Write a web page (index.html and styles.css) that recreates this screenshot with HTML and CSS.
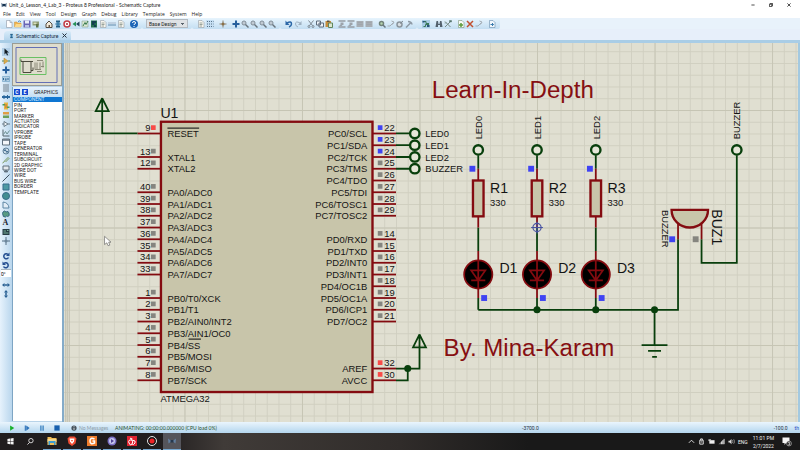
FILE: index.html
```html
<!DOCTYPE html>
<html lang="en">
<head>
<meta charset="utf-8">
<title>Schematic Capture</title>
<link rel="stylesheet" href="styles.css">
</head>
<body>
<svg class="defs" aria-hidden="true">
  <defs>
    <symbol id="new" viewBox="0 0 16 16"><path d="M3 1h7l4 4v10H3z" fill="#fff" stroke="#7c8794"/><path d="M10 1v4h4" fill="none" stroke="#7c8794"/></symbol>
    <symbol id="open" viewBox="0 0 16 16"><path d="M1 4h5l1 2h7v8H1z" fill="#f0b650" stroke="#c98f3e"/><path d="M4 8h12l-3 6H1z" fill="#fbd98a"/><path d="M8 3q4-3 6 1" fill="none" stroke="#4a90c8" stroke-width="2"/></symbol>
    <symbol id="save" viewBox="0 0 16 16"><path d="M1 1h14v14H1z" fill="#6a65b5"/><path d="M4 1h8v6H4z" fill="#e8ecf8"/><path d="M4 10h8v5H4z" fill="#b9c0e2"/></symbol>
    <symbol id="pack" viewBox="0 0 16 16"><path d="M1 3h13v8H1z" fill="#8f9b75"/><path d="M3 5h6v3H3z" fill="#d6dfba"/><path d="M8 8h5v7H8z" fill="#5f7446"/></symbol>
    <symbol id="home" viewBox="0 0 16 16"><path d="M2 8l6-6 6 6v7H2z" fill="#f4eddc" stroke="#564c42" stroke-width="2"/><path d="M7 10h3v5H7z" fill="#685743"/></symbol>
    <symbol id="chip" viewBox="0 0 16 16"><path d="M4 1h8v4H4zM4 11h8v4H4z" fill="#235e86"/><path d="M8 4v8M3 8h10" stroke="#3479a5" stroke-width="3"/></symbol>
    <symbol id="target" viewBox="0 0 16 16"><circle cx="8" cy="8" r="6" fill="#fff" stroke="#c33b45" stroke-width="3"/><circle cx="8" cy="8" r="2" fill="#a82432"/></symbol>
    <symbol id="rewind" viewBox="0 0 16 16"><path d="M8 3v10L1 8z" fill="#28925a"/><path d="M15 3v10L8 8z" fill="#22475a"/></symbol>
    <symbol id="chart" viewBox="0 0 16 16"><path d="M2 2h12v12H2z" fill="#dce9d5" stroke="#7a9480"/><path d="M4 12l4-7 2 4 4-7" fill="none" stroke="#3c7c50" stroke-width="2"/></symbol>
    <symbol id="board" viewBox="0 0 16 16"><path d="M2 1h12v14H2z" fill="#23704d"/><path d="M4 4h8M4 8h5M8 12h4" stroke="#0e2f53" stroke-width="3"/></symbol>
    <symbol id="doc" viewBox="0 0 16 16"><path d="M3 1h7l4 4v10H3z" fill="#f7f6ef" stroke="#858d94"/><path d="M5 6h6M5 9h6M5 12h5" stroke="#9ba49c" stroke-width="2"/></symbol>
    <symbol id="dash" viewBox="0 0 16 16"><path d="M0 6h16" stroke="#b9c9da" stroke-width="3"/><path d="M0 10h16" stroke="#6189aa" stroke-width="2"/></symbol>
    <symbol id="help" viewBox="0 0 16 16"><circle cx="8" cy="8" r="8" fill="#1c65b7"/><path d="M5 6q0-3 3-3t3 3q0 2-3 3v1M8 12v2" fill="none" stroke="#fff" stroke-width="2"/></symbol>
    <symbol id="grid" viewBox="0 0 16 16"><path d="M0 0h16v16H0z" fill="#c6dff3"/><path d="M2 3h13M2 8h13M2 13h13" stroke="#587287" stroke-width="2" stroke-dasharray="2 2"/></symbol>
    <symbol id="origin" viewBox="0 0 16 16"><path d="M8 1v14M1 8h14" stroke="#8a806f" stroke-width="2"/><circle cx="8" cy="8" r="3" fill="#8a7047"/></symbol>
    <symbol id="plus" viewBox="0 0 16 16"><path d="M8 1v14M1 8h14" stroke="#275f9c" stroke-width="4"/></symbol>
    <symbol id="lens" viewBox="0 0 16 16"><circle cx="6" cy="6" r="4" fill="#dbe5ee" stroke="#7b8791" stroke-width="2"/><path d="M9 9l6 6" stroke="#69747d" stroke-width="3"/><path d="M4 6h4" stroke="#69747d"/></symbol>
    <symbol id="undo" viewBox="0 0 16 16"><path d="M4 6q9-5 9 2 0 4-5 6" fill="none" stroke="#2b67a7" stroke-width="3"/><path d="M1 1v9h8z" fill="#2b67a7"/></symbol>
    <symbol id="redo" viewBox="0 0 16 16"><path d="M12 6q-9-5-9 2 0 4 5 6" fill="none" stroke="#9eb0c0" stroke-width="2"/><path d="M15 2v8H8z" fill="#9eb0c0"/></symbol>
    <symbol id="cut" viewBox="0 0 16 16"><path d="M3 1l8 10M13 1L5 11" stroke="#7e8993" stroke-width="2"/><circle cx="4" cy="13" r="2" fill="none" stroke="#7e8993" stroke-width="2"/><circle cx="12" cy="13" r="2" fill="none" stroke="#7e8993" stroke-width="2"/></symbol>
    <symbol id="copy" viewBox="0 0 16 16"><path d="M1 2h8v8H1zM6 6h9v8H6z" fill="#edf2f7" stroke="#5f6d7d" stroke-width="2"/></symbol>
    <symbol id="paste" viewBox="0 0 16 16"><path d="M1 2h11v12H1z" fill="#c58d3c"/><path d="M4 1h5v3H4z" fill="#5d5140"/><path d="M7 6h8v9H7z" fill="#dbe6d0" stroke="#60865c" stroke-width="2"/></symbol>
    <symbol id="block" viewBox="0 0 16 16"><path d="M1 2h14v12H1z" fill="#a7adb3"/><path d="M3 5h10M3 9h10" stroke="#989fa6"/></symbol>
    <symbol id="blocks" viewBox="0 0 16 16"><path d="M1 2h14M1 14h14" stroke="#969da4" stroke-width="3"/><path d="M5 5h6v5H5zM2 12l4-4 3 4" fill="#9da4ab"/></symbol>
    <symbol id="pick" viewBox="0 0 16 16"><circle cx="7" cy="7" r="4" fill="#b4d4af" stroke="#71827a" stroke-width="3"/><path d="M10 10l5 5" stroke="#687780" stroke-width="3"/></symbol>
    <symbol id="gate" viewBox="0 0 16 16"><path d="M1 12h5l6-6M9 2l5 2-3 5" fill="none" stroke="#a3acb4" stroke-width="2"/></symbol>
    <symbol id="ball" viewBox="0 0 16 16"><circle cx="7" cy="9" r="5" fill="#d8dfe4" stroke="#8b959d" stroke-width="3"/><path d="M8 7l6-5" stroke="#7d8992" stroke-width="2"/></symbol>
    <symbol id="hammer" viewBox="0 0 16 16"><path d="M2 15l9-9M6 3q7 0 8 6" fill="none" stroke="#8e9aa5" stroke-width="3"/></symbol>
    <symbol id="wires" viewBox="0 0 16 16"><path d="M0 0h16v16H0z" fill="#a9cde6"/><path d="M2 3h6v4h6M3 13h4V9h7" fill="none" stroke="#39785a" stroke-width="2"/><path d="M1 2h4v3H1zM10 10h5v4h-5z" fill="#285478"/></symbol>
    <symbol id="find" viewBox="0 0 16 16"><path d="M3 2h3l1 6h2l1-6h3l2 12h-5v-4H6v4H1z" fill="#53616d"/></symbol>
    <symbol id="wand" viewBox="0 0 16 16"><path d="M2 3l11 11M2 14L13 3" stroke="#778a86" stroke-width="2"/><path d="M11 1h4v3h-4zM1 6h4" fill="#56756e" stroke="#56756e"/></symbol>
    <symbol id="add" viewBox="0 0 16 16"><path d="M3 1h7l4 4v10H3z" fill="#f8faf7" stroke="#66805d"/><path d="M8 6v8M4 10h8" stroke="#5d9c3c" stroke-width="3"/></symbol>
    <symbol id="del" viewBox="0 0 16 16"><path d="M2 2l12 12M14 2L2 14" stroke="#c1502f" stroke-width="3"/></symbol>
    <symbol id="sheet" viewBox="0 0 16 16"><path d="M3 1h7l4 4v10H3z" fill="#f0f6fb" stroke="#4f7a9e"/><path d="M5 9h6M8 6l3 3-3 3" fill="none" stroke="#397bae" stroke-width="2"/></symbol>
    <symbol id="arrow" viewBox="0 0 16 16"><path d="M0 0h16v16H0z" fill="#b2cfe7"/><path d="M5 1v12l3-3 2 5 2-1-2-5h4z" fill="#111a23"/></symbol>
    <symbol id="comp" viewBox="0 0 16 16"><path d="M0 8h4M12 8h4" stroke="#4a8759" stroke-width="2"/><path d="M4 2l8 6-8 6z" fill="#d7b04c" stroke="#b97928"/></symbol>
    <symbol id="lbl" viewBox="0 0 16 16"><path d="M1 3h14v10H1z" fill="#b4d0e4" stroke="#5790b8"/><path d="M3 10V6M6 10h3M6 8h3M12 6v4" stroke="#2f6794" stroke-width="2"/></symbol>
    <symbol id="lines" viewBox="0 0 16 16"><path d="M2 2h12M2 6h12M2 10h12M2 14h12" stroke="#74828e" stroke-width="2"/></symbol>
    <symbol id="bus" viewBox="0 0 16 16"><path d="M0 8h16" stroke="#2c6aa3" stroke-width="4"/><path d="M4 4v8M11 4v8" stroke="#286495" stroke-width="2"/></symbol>
    <symbol id="sub" viewBox="0 0 16 16"><path d="M4 1h8v14H4z" fill="#e3b644"/><path d="M1 4h5v3H1zM10 9h5v3h-5z" fill="#4c9a5b"/><path d="M8 4v8" stroke="#c56a2f" stroke-width="2"/></symbol>
    <symbol id="term" viewBox="0 0 16 16"><path d="M2 2h12v5H2z" fill="#df9e45"/><path d="M2 9h12v5H2z" fill="#6b9f58"/></symbol>
    <symbol id="pin" viewBox="0 0 16 16"><path d="M0 8h4M12 8h4" stroke="#6a7b87" stroke-width="2"/><path d="M4 3l8 5-8 5z" fill="#f3f7f9" stroke="#6a7b87" stroke-width="2"/></symbol>
    <symbol id="graph" viewBox="0 0 16 16"><path d="M2 1v13h13" fill="none" stroke="#55646f" stroke-width="2"/><path d="M3 11l4-6 3 5 5-7" fill="none" stroke="#6d9093" stroke-width="2"/></symbol>
    <symbol id="tape" viewBox="0 0 16 16"><path d="M1 2h14v12H1z" fill="#f4f7fa" stroke="#61717f" stroke-width="2"/><path d="M1 4h14" stroke="#61717f" stroke-width="3"/></symbol>
    <symbol id="gen" viewBox="0 0 16 16"><circle cx="8" cy="8" r="6" fill="#cbdce9" stroke="#5f7f98" stroke-width="2"/><path d="M4 8q2-6 4 0t4 0" fill="none" stroke="#315f85" stroke-width="2"/></symbol>
    <symbol id="probe" viewBox="0 0 16 16"><path d="M1 14q3-1 4-4l7-7 2 2-7 7" fill="none" stroke="#77975c" stroke-width="2"/></symbol>
    <symbol id="meter" viewBox="0 0 16 16"><path d="M2 2h12v8H2z" fill="#e4e9ed" stroke="#60707d" stroke-width="2"/><path d="M4 13h8M8 10v5" stroke="#60707d" stroke-width="3"/></symbol>
    <symbol id="line" viewBox="0 0 16 16"><path d="M1 15L15 1" stroke="#40515e" stroke-width="2"/></symbol>
    <symbol id="box" viewBox="0 0 16 16"><path d="M2 2h12v12H2z" fill="#4e9aa4" stroke="#376c8c" stroke-width="2"/></symbol>
    <symbol id="circ" viewBox="0 0 16 16"><circle cx="8" cy="8" r="7" fill="#438e91" stroke="#3a6d88" stroke-width="2"/></symbol>
    <symbol id="arc" viewBox="0 0 16 16"><path d="M2 14V2q11 1 12 12z" fill="#e2edf6" stroke="#5d86a4" stroke-width="2"/></symbol>
    <symbol id="path" viewBox="0 0 16 16"><path d="M2 4q3-4 6 0 5-3 6 2 2 7-3 7-2-2-4 1-6 0-5-4-2-3 0-6z" fill="#579b82" stroke="#376882" stroke-width="2"/></symbol>
    <symbol id="sym" viewBox="0 0 16 16"><path d="M1 2h14v12H1z" fill="#263c44"/><path d="M3 6h5M3 10h10M10 5h3" stroke="#7bb29d" stroke-width="2"/></symbol>
    <symbol id="mark" viewBox="0 0 16 16"><path d="M8 0v16M0 8h16" stroke="#546e84" stroke-width="2"/><circle cx="8" cy="8" r="3" fill="#6c869b"/></symbol>
    <symbol id="cw" viewBox="0 0 16 16"><path d="M12 5a5 5 0 1 0 1 6" fill="none" stroke="#254f91" stroke-width="3"/><path d="M15 1v7H8z" fill="#254f91"/></symbol>
    <symbol id="ccw" viewBox="0 0 16 16"><path d="M4 5a5 5 0 1 1-1 6" fill="none" stroke="#254f91" stroke-width="3"/><path d="M1 1v7h7z" fill="#254f91"/></symbol>
    <symbol id="flip" viewBox="0 0 16 16"><path d="M0 8l5-4v8zM16 8l-5-4v8z" fill="#2a6093"/><path d="M3 8h10M8 6v4" stroke="#2a6093" stroke-width="2"/></symbol>
    <symbol id="flipv" viewBox="0 0 16 16"><path d="M8 0L4 5h8zM8 16l-4-5h8z" fill="#2a6093"/><path d="M8 3v10M6 8h4" stroke="#2a6093" stroke-width="2"/></symbol>
  </defs>
</svg>

<header>
  <div class="titlebar">
    <svg class="app-icon" viewBox="0 0 16 16"><path d="M1 2l4 3h6l4-3-1 12-4-3H6l-4 3z" fill="#4c6581"/><path d="M5 5h6v6H5z" fill="#16324e"/></svg>
    <span class="title">Unit_6_Lesson_4_Lab_3 - Proteus 8 Professional - Schematic Capture</span>
    <div class="window-buttons">
      <button aria-label="Minimize"><svg viewBox="0 0 10 10"><path d="M1 5h8" stroke="#222" stroke-width="2"/></svg></button>
      <button aria-label="Restore"><svg viewBox="0 0 10 10"><path d="M1 3h6v6H1zM3 3V1h6v6H7" fill="none" stroke="#222" stroke-width="2"/></svg></button>
      <button aria-label="Close"><svg viewBox="0 0 10 10"><path d="M1 1l8 8M9 1L1 9" stroke="#222" stroke-width="2"/></svg></button>
    </div>
  </div>
  <nav class="menu">
    <button>File</button><button>Edit</button><button>View</button><button>Tool</button><button>Design</button><button>Graph</button><button>Debug</button><button>Library</button><button>Template</button><button>System</button><button>Help</button>
  </nav>
  <div class="toolbars">
    <div class="bar">
      <div class="group" data-icons="new open save pack"></div>
      <div class="group" data-icons="home chip target rewind chart board doc dash doc"></div>
      <div class="group" data-icons="help"></div>
    </div>
    <div class="bar">
      <select aria-label="Design variant"><option>Base Design</option></select>
    </div>
    <div class="bar">
      <div class="group" data-icons="doc grid"></div>
      <div class="group" data-icons="origin"></div>
      <div class="group" data-icons="plus lens lens lens lens"></div>
    </div>
    <div class="bar">
      <div class="group" data-icons="undo redo"></div>
      <div class="group" data-icons="cut copy paste"></div>
      <div class="group" data-icons="blocks blocks block block"></div>
      <div class="group" data-icons="pick gate ball hammer"></div>
    </div>
    <div class="bar">
      <div class="group" data-icons="wires"></div>
      <div class="group" data-icons="find wand"></div>
      <div class="group" data-icons="add del gate"></div>
      <div class="group" data-icons="sheet"></div>
    </div>
  </div>
  <div class="tabs">
    <div class="tab">
      <svg viewBox="0 0 16 16"><use href="#chip"/></svg>
      <span>Schematic Capture</span>
      <button aria-label="Close tab"><svg viewBox="0 0 10 10"><path d="M1 1l8 8M9 1L1 9" stroke="#26323e" stroke-width="2"/></svg></button>
    </div>
  </div>
</header>

<main>
  <aside class="modes">
    <div class="group" data-icons="arrow comp plus lbl lines bus sub term pin graph tape gen probe meter line box circ arc path"></div>
    <button class="tool letter" aria-label="Text">A</button>
    <div class="group" data-icons="sym mark"></div>
    <div class="group rotate" data-icons="cw ccw"></div>
    <input class="angle" aria-label="Rotation angle" value="0°">
    <div class="group mirror" data-icons="flip flipv"></div>
  </aside>
  <section class="side">
    <div class="overview">
      <svg viewBox="0 0 48 40">
        <path d="M3 3h41v35H3z" fill="none" stroke="#6470b4"/>
        <path d="M7 13h26v17H7z" fill="none" stroke="#69c063"/>
        <path d="M10 17h8v11h-8zM8 15v2h2M18 17h2M18 26h2v-3" fill="none" stroke="#4b4a3c"/>
        <path d="M22 18v7M24 18v7M27 18v7M22 25h6M30 17v6M28 22h3M24 16h6M24 27h5" fill="none" stroke="#8a8876"/>
      </svg>
    </div>
    <div class="picker">
      <div class="picker-head"><button>C</button><button>E</button><span>GRAPHICS</span></div>
      <ul>
        <li class="selected">COMPONENT</li><li>PIN</li><li>PORT</li><li>MARKER</li><li>ACTUATOR</li><li>INDICATOR</li><li>VPROBE</li><li>IPROBE</li><li>TAPE</li><li>GENERATOR</li><li>TERMINAL</li><li>SUBCIRCUIT</li><li>2D GRAPHIC</li><li>WIRE DOT</li><li>WIRE</li><li>BUS WIRE</li><li>BORDER</li><li>TEMPLATE</li>
      </ul>
    </div>
  </section>
  <!-- One grid cell of the sheet is 20 units. -->
  <svg class="sheet" viewBox="-205 -114 1250 645" preserveAspectRatio="xMinYMin slice">
    <defs>
      <pattern id="minor" width="20" height="20" patternUnits="userSpaceOnUse"><path d="M0 0H20M0 0V20" class="minor"/></pattern>
      <pattern id="major" width="200" height="200" patternUnits="userSpaceOnUse"><path d="M0 0H200M0 0V200" class="major"/></pattern>
    </defs>
    <rect x="-205" y="-200" width="2000" height="1000" fill="url(#minor)"/>
    <rect x="-205" y="-200" width="2000" height="1000" fill="url(#major)"/>
    <path class="edge" d="M-202 -200V900M-196 -200V900"/>

    <text class="heading" x="421" y="-21">Learn-In-Depth</text>
    <text class="heading" x="441" y="419">By. Mina-Karam</text>

    <rect class="body" x="-40" y="20" width="360" height="460"/>
    <text class="ref" x="-41" y="13">U1</text>
    <text x="-41" y="497">ATMEGA32</text>
    <g id="pins"></g>
    <path class="bar-over" d="M-29 31H25M7 390H28"/>

    <g class="wire">
      <path d="M-80 40H-140V-20L-151 2H-129L-140 -20"/>
      <path d="M360 440H400V382L389 404H411L400 382M360 460H380V440"/>
      <path d="M360 40H384M360 60H384M360 80H384M360 100H384"/>
      <circle cx="392" cy="40" r="8"/><circle cx="392" cy="60" r="8"/><circle cx="392" cy="80" r="8"/><circle cx="392" cy="100" r="8"/>
      <path d="M500 340H840V220M880 220V260H940V77M800 340V400M778 400H822M789 410H811M796 420H804"/>
      <circle cx="940" cy="68" r="8"/>
    </g>
    <g class="dot"><circle cx="380" cy="440" r="6"/><circle cx="600" cy="340" r="6"/><circle cx="700" cy="340" r="6"/><circle cx="800" cy="340" r="6"/></g>
    <text x="410" y="46">LED0</text><text x="410" y="66">LED1</text><text x="410" y="86">LED2</text><text x="410" y="106">BUZZER</text>

    <g id="branches"></g>
    <g class="probe"><circle cx="600" cy="200" r="7"/><path d="M590 200H610M600 190V210"/></g>

    <path class="pin" d="M840 190V220M880 190V220"/>
    <path class="body" d="M829 170H891A31 30 0 0 1 829 170Z"/>
    <rect class="low" x="825" y="215" width="10" height="10"/>
    <rect class="idle" x="865" y="215" width="10" height="10"/>
    <text transform="translate(813 170) rotate(90)">BUZZER</text>
    <text class="ref" transform="translate(898 169) rotate(90)">BUZ1</text>
    <text transform="translate(946 50) rotate(-90)">BUZZER</text>

    <path class="cursor" d="M-136 215V229L-132 226L-130 231L-127 230L-129 225H-125Z"/>
  </svg>
</main>

<footer class="status">
  <div class="sim">
    <button aria-label="Run"><svg viewBox="0 0 16 16"><path d="M3 1l11 7-11 7z" fill="#18b02b"/></svg></button>
    <button aria-label="Step"><svg viewBox="0 0 16 16"><path d="M2 1h3v14H2zM6 1l9 7-9 7z" fill="#2c72b8"/></svg></button>
    <button aria-label="Pause"><svg viewBox="0 0 16 16"><path d="M3 1h4v14H3zM9 1h4v14H9z" fill="#4b8cc6"/></svg></button>
    <button aria-label="Stop"><svg viewBox="0 0 16 16"><path d="M1 1h14v14H1z" fill="#175fae"/></svg></button>
  </div>
  <div class="messages"><svg viewBox="0 0 16 16"><circle cx="8" cy="8" r="7" fill="#46525c"/><path d="M8 3v2M8 7v6" stroke="#fff" stroke-width="2"/></svg><span>No Messages</span></div>
  <span class="anim">ANIMATING: 00:00:00.000000 (CPU load 0%)</span>
  <span class="coord">-3700.0</span>
  <span class="coord">-100.0</span>
  <span class="unit">th</span>
</footer>

<footer class="taskbar">
  <div class="launch">
    <button aria-label="Start"><svg viewBox="0 0 16 16"><path d="M1 2l6-1v6H1zM8 1l7-1v7H8zM1 8h6v6l-6-1zM8 8h7v7l-7-1z" fill="#f4f4f4"/></svg></button>
    <button aria-label="Search"><svg viewBox="0 0 16 16"><circle cx="9" cy="6" r="5" fill="none" stroke="#e6e6e6" stroke-width="2"/><path d="M6 10l-5 5" stroke="#e6e6e6" stroke-width="2"/></svg></button>
  </div>
  <div class="apps">
    <button aria-label="Files"><svg viewBox="0 0 20 20"><path d="M1 2h7l2 2h9v14H1z" fill="#f0bd55"/><path d="M1 6h18v6H1z" fill="#f6d98c"/><path d="M3 10h14v8h-3v-4H6v4H3z" fill="#3f9ccf"/></svg></button>
    <button aria-label="Brave"><svg viewBox="0 0 20 20"><path d="M5 1h10l4 4-2 10-7 5-7-5L1 5z" fill="#ef4b32"/><path d="M5 5h10l-1 6-4 5-4-5z" fill="#fff"/><path d="M8 8h4l-2 4z" fill="#ef4b32"/></svg></button>
    <button aria-label="Foxit"><svg viewBox="0 0 20 20"><path d="M0 0h20v20H0z" fill="#ee7c2b"/><path d="M15 6q-9-4-9 4t9 4v-4h-4" fill="none" stroke="#fff" stroke-width="3"/></svg></button>
    <button aria-label="Eclipse"><svg viewBox="0 0 20 20"><circle cx="10" cy="10" r="9" fill="#7b6fc4"/><circle cx="10" cy="10" r="6" fill="#c6c8ee"/><path d="M8 6l6 4-6 4z" fill="#514497"/></svg></button>
    <button aria-label="PDF reader"><svg viewBox="0 0 20 20"><path d="M0 0h20v20H0z" fill="#df2330"/><path d="M10 4q-3 3 0 5t0 7-6-2 6-6 6 6-6 2M6 4l3 2" fill="none" stroke="#fff" stroke-width="2"/></svg></button>
    <button aria-label="Recorder"><svg viewBox="0 0 20 20"><circle cx="10" cy="10" r="9" fill="#171717" stroke="#e5e5e5" stroke-width="2"/><circle cx="10" cy="10" r="5" fill="#ee2427"/></svg></button>
    <button class="active" aria-label="Proteus"><svg viewBox="0 0 20 20"><path d="M2 5l4 3h8l4-3-1 10-4-3H7l-4 3z" fill="#637f9e"/><path d="M7 8h6v5H7z" fill="#27384c"/></svg></button>
  </div>
  <div class="tray">
    <svg viewBox="0 0 16 16"><path d="M2 11l6-6 6 6" fill="none" stroke="#eee" stroke-width="2"/></svg>
    <svg viewBox="0 0 16 16"><path d="M4 5h8v9H4zM6 5V2h4v3M6 9h4" fill="none" stroke="#eee" stroke-width="2"/></svg>
    <svg viewBox="0 0 16 16"><path d="M3 5h12v8H3z" fill="#eee"/><path d="M1 3h6v4H1z" fill="#ccc"/></svg>
    <svg viewBox="0 0 16 16"><path d="M1 14L14 2v12z" fill="#777"/><path d="M8 14V8M11 14V5M14 14V2" stroke="#ddd" stroke-width="2"/></svg>
    <svg viewBox="0 0 16 16"><path d="M1 6h3l4-4v12l-4-4H1z" fill="#ddd"/><path d="M10 5q2 3 0 6M13 3q4 5 0 10" fill="none" stroke="#999" stroke-width="2"/></svg>
    <span>ENG</span>
    <time>11:01 PM<br>2/7/2022</time>
    <svg class="notice" viewBox="0 0 20 20"><path d="M1 1h14v11H8l-3 4v-4H1z" fill="#f5f5f5"/><circle cx="14" cy="13" r="5" fill="#333" stroke="#ccc"/><path d="M12 11h3q1 2-1 2 2 0 1 3h-3" fill="none" stroke="#fff"/></svg>
  </div>
</footer>
<script src="schematic.js"></script>
</body>
</html>
```
FILE: styles.css
```css
* { box-sizing: border-box; }
body {
  margin: 0;
  height: 100vh;
  display: flex;
  flex-direction: column;
  overflow: hidden;
  background: #e7f0f9;
  color: #222;
  font: 5px/6px Roboto, "Liberation Sans", sans-serif;
}
button {
  margin: 0;
  padding: 0;
  border: 0;
  background: none;
  color: inherit;
  font: inherit;
}
svg { display: block; }
.defs { position: absolute; width: 0; height: 0; }

.titlebar { display: flex; align-items: center; height: 10px; padding-left: 1px; background: #fff; }
.title, .anim, .messages { font-family: Lato, sans-serif; }
.app-icon { width: 6px; height: 6px; margin-right: 2px; }
.window-buttons { display: flex; margin-left: auto; padding-right: 2px; }
.window-buttons button { width: 18px; height: 10px; display: grid; place-items: center; }
.window-buttons svg { width: 4px; height: 4px; }
.menu { display: flex; gap: 5px; height: 8px; padding-left: 3px; background: #fff; font-family: "Open Sans", sans-serif; line-height: 7px; }

.toolbars { display: flex; height: 11px; background: #e8f2fb; }
.bar {
  display: flex;
  align-items: center;
  gap: 4px;
  padding: 0 4px;
  border-radius: 2px;
  background: linear-gradient(#e7f4fd, #c3def2);
}
.group { display: flex; }
.tool { display: grid; place-items: center; width: 9px; height: 9px; }
.tool svg { width: 8px; height: 8px; }
.bar select {
  width: 42px;
  height: 9px;
  padding: 0 0 0 2px;
  border: 1px solid #b3bac1;
  border-radius: 0;
  appearance: none;
  background:
    linear-gradient(45deg, transparent 50%, #59636c 50%) right 4px top 3px / 2px 2px no-repeat,
    linear-gradient(-45deg, transparent 50%, #59636c 50%) right 2px top 3px / 2px 2px no-repeat,
    #dfe2e5;
  color: #222;
  font: inherit;
}
.tabs { height: 14px; padding: 2px 0 0 4px; border-bottom: 3px solid #a9cde6; background: #e7effa; }
.tab {
  display: inline-flex;
  align-items: center;
  gap: 2px;
  height: 9px;
  padding: 0 4px 0 5px;
  border-radius: 4px 2px 0 0;
  background: linear-gradient(#d8ebf9, #b5d5ec);
  color: #14293c;
}
.tab > svg { width: 5px; height: 6px; }
.tab button { margin-left: 2px; }
.tab button svg { width: 5px; height: 5px; }

main { display: flex; flex: 1; min-height: 0; border-right: 2px solid #a3c9e0; }
.modes { width: 12px; padding: 4px 1px 0; background: linear-gradient(90deg, #e6f2fc, #b9d6ed); }
.modes .group { flex-direction: column; }
.letter { width: 9px; color: #18222c; font: bold 8px/9px "Liberation Serif", serif; }
.modes .rotate { margin-top: 6px; }
.modes .mirror { margin-top: 3px; }
.angle { display: block; width: 10px; height: 8px; padding: 0; border: 0; border-top: 1px solid #a7b4bf; background: #fff; font: inherit; }

.side { display: flex; flex-direction: column; gap: 1px; width: 52px; padding-bottom: 1px; border-right: 2px solid #85abc9; background: #b8d3e8; }
.overview { height: 43px; border: 1px solid #9a9c94; background: #dfddcd; }
.overview svg { width: 100%; height: 100%; }
.picker { flex: 1; min-height: 0; border-left: 1px solid #7ea5c4; background: #fff; }
.picker-head { display: flex; align-items: center; gap: 2px; height: 10px; padding: 0 4px 0 1px; background: linear-gradient(#e6f2fc, #c6dff2); }
.picker-head button { width: 6px; height: 6px; background: #1547d0; color: #fff; font-weight: bold; line-height: 6px; }
.picker-head span { margin-left: auto; }
.picker ul { display: grid; grid-auto-rows: 1fr; height: 98px; margin: 0; padding: 0; list-style: none; }
.picker li { display: flex; align-items: center; min-height: 0; line-height: 5px; padding-left: 1px; }
.picker .selected { background: #0e76d2; color: #d4e9ff; }

.sheet { flex: 1; min-width: 0; height: 100%; background: #e0dfd1; }
.sheet text { fill: #141414; font: 16px "Liberation Sans", sans-serif; }
.sheet .ref { font-size: 24px; }
.sheet .heading { fill: #860f12; font-size: 41px; }
.sheet .end { text-anchor: end; }
.minor { fill: none; stroke: #d0cfc0; stroke-width: 3; }
.major { fill: none; stroke: #c6c5b4; stroke-width: 3; }
.edge { fill: none; stroke: #c2c1b1; stroke-width: 2; }
.body { fill: #c8c5aa; stroke: #840b10; stroke-width: 4; }
.pin { fill: none; stroke: #840b10; stroke-width: 3; }
.wire { fill: none; stroke: #083f0c; stroke-width: 3; }
.wire circle { fill: #e6e6d8; stroke-width: 4; }
.dot { fill: #083f0c; }
.bar-over { stroke: #2c2c28; stroke-width: 2; }
.idle { fill: #85857f; }
.low { fill: #3f43f2; }
.high { fill: #f84b48; }
.lamp { fill: #000; stroke: #840b10; stroke-width: 3; }
.probe { fill: none; stroke: #4752a2; stroke-width: 2; }
.cursor { fill: #fff; stroke: #555; stroke-width: 1; }

.status { display: flex; align-items: center; height: 11px; background: linear-gradient(#eaf5fd, #b4d6ee); color: #26323c; }
.sim { display: flex; width: 68px; padding-left: 4px; }
.sim button { width: 15px; height: 7px; display: grid; place-items: center; }
.sim svg { width: 6px; height: 6px; }
.messages { display: flex; align-items: center; gap: 2px; width: 47px; padding-left: 3px; color: #8f9eaa; }
.messages svg { width: 6px; height: 6px; }
.anim { width: 407px; color: #24512c; }
.coord + .coord { margin-left: auto; }
.unit { margin: 0 1px 0 7px; color: #2447c0; }

.taskbar { display: flex; height: 17px; background: linear-gradient(90deg, #201d1e 20%, #403b38 28%, #302c2a 50%, #191919 66%, #191919); color: #f0f0f0; }
.taskbar button { display: grid; place-items: center; }
.launch { display: flex; }
.launch button { width: 20px; }
.launch svg { width: 7px; height: 7px; }
.apps { display: flex; gap: 2px; padding-left: 3px; }
.apps button { width: 18px; border-bottom: 1px solid #76a9d2; }
.apps svg { width: 10px; height: 10px; }
.apps .active { background: #55555b; }
.tray { display: flex; align-items: center; gap: 3px; margin-left: auto; padding-right: 8px; }
.tray svg { width: 7px; height: 7px; }
.tray time { margin: 0 5px 0 2px; line-height: 8px; text-align: center; }
.tray .notice { width: 10px; height: 10px; }
```
FILE: schematic.js
```js
document.querySelectorAll(".group").forEach(group => {
  group.innerHTML = group.dataset.icons.split(" ").map(name =>
    `<button class="tool" aria-label="${name}"><svg viewBox="0 0 16 16"><use href="#${name}"/></svg></button>`
  ).join("");
});

// [y, pin number, label, state]
const left = [
  [40, 9, "RESET", "high"], [80, 13, "XTAL1"], [100, 12, "XTAL2"],
  [140, 40, "PA0/ADC0"], [160, 39, "PA1/ADC1"], [180, 38, "PA2/ADC2"], [200, 37, "PA3/ADC3"],
  [220, 36, "PA4/ADC4"], [240, 35, "PA5/ADC5"], [260, 34, "PA6/ADC6"], [280, 33, "PA7/ADC7"],
  [320, 1, "PB0/T0/XCK"], [340, 2, "PB1/T1"], [360, 3, "PB2/AIN0/INT2"], [380, 4, "PB3/AIN1/OC0"],
  [400, 5, "PB4/SS"], [420, 6, "PB5/MOSI"], [440, 7, "PB6/MISO"], [460, 8, "PB7/SCK"]
];
const right = [
  [40, 22, "PC0/SCL", "low"], [60, 23, "PC1/SDA", "low"], [80, 24, "PC2/TCK", "low"], [100, 25, "PC3/TMS"],
  [120, 26, "PC4/TDO"], [140, 27, "PC5/TDI"], [160, 28, "PC6/TOSC1"], [180, 29, "PC7/TOSC2"],
  [220, 14, "PD0/RXD"], [240, 15, "PD1/TXD"], [260, 16, "PD2/INT0"], [280, 17, "PD3/INT1"],
  [300, 18, "PD4/OC1B"], [320, 19, "PD5/OC1A"], [340, 20, "PD6/ICP1"], [360, 21, "PD7/OC2"],
  [440, 32, "AREF", "high"], [460, 30, "AVCC", "high"]
];

const pin = (onLeft, [y, number, label, state = "idle"]) => `
  <path class="pin" d="M${onLeft ? -80 : 320} ${y}h40"/>
  <rect class="${state}" x="${onLeft ? -57 : 329}" y="${y - 14}" width="8" height="8"/>
  <text class="${onLeft ? "end" : ""}" x="${onLeft ? -58 : 340}" y="${y - 4}">${number}</text>
  <text class="${onLeft ? "" : "end"}" x="${onLeft ? -29 : 311}" y="${y + 6}">${label}</text>`;

document.getElementById("pins").innerHTML =
  left.map(p => pin(true, p)).join("") + right.map(p => pin(false, p)).join("");

document.getElementById("branches").innerHTML = [0, 1, 2].map(i => `
  <g transform="translate(${500 + 100 * i} 0)">
    <path class="wire" d="M0 77V100M0 200V240M0 320V340"/>
    <g class="wire"><circle cx="0" cy="68" r="8"/></g>
    <path class="pin" d="M0 100V120M0 180V200M0 304V320"/>
    <rect class="body" x="-9" y="120" width="18" height="61"/>
    <circle class="lamp" cx="0" cy="280" r="24"/>
    <path class="pin" d="M0 240V304M-12 273H12L0 290ZM-12 290H12"/>
    <rect class="low" x="-15" y="95" width="10" height="10"/>
    <rect class="low" x="5" y="315" width="10" height="10"/>
    <text transform="translate(7 50) rotate(-90)">LED${i}</text>
    <text class="ref" x="20" y="142">R${i + 1}</text>
    <text x="20" y="163">330</text>
    <text class="ref" x="36" y="278">D${i + 1}</text>
  </g>`).join("");
```
